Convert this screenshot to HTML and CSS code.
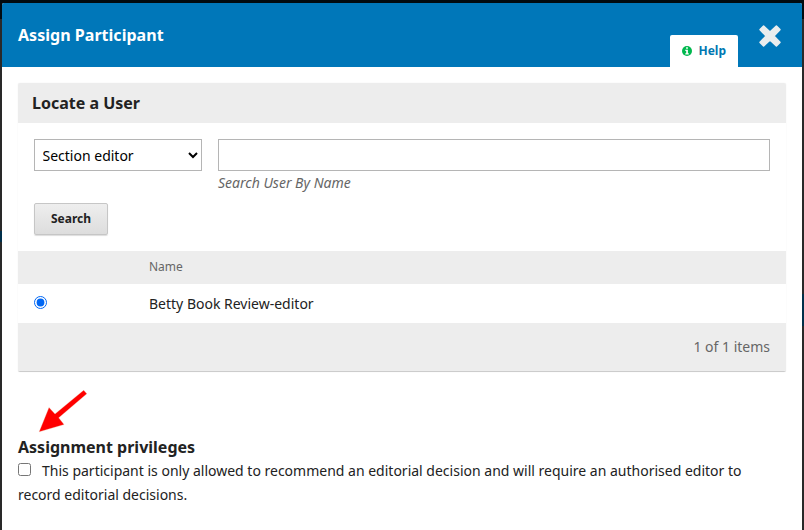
FILE: index.html
```html
<!DOCTYPE html>
<html lang="en">
<head>
<meta charset="utf-8">
<title>Assign Participant</title>
<link rel="stylesheet" href="styles.css">
</head>
<body>
<main class="modal">
  <header class="modal-header">
    <h1>Assign Participant</h1>
    <a class="help">
      <svg width="10" height="10" viewBox="0 0 10 10"><circle cx="5" cy="5" r="5" fill="#00b84e"/><path d="M4.1 1.3h1.8v1.5H4.1zM3.3 3.7h2.6v3.5h.9v1.2H3.3V7.2h.9V4.9h-.9z" fill="#fff"/></svg>
      <span>Help</span>
    </a>
    <svg class="close" width="22" height="22" viewBox="0 0 22 22"><path d="M4.6 1.1L11 7.1 17.4 1.1 20.9 4.6 14.9 11 20.9 17.4 17.4 20.9 11 14.9 4.6 20.9 1.1 17.4 7.1 11 1.1 4.6z" fill="#eaedee" stroke="#eaedee" stroke-width="1.6" stroke-linejoin="round"/></svg>
  </header>
  <section class="grid-box">
    <h2 class="grid-title">Locate a User</h2>
    <form class="filters">
      <div class="fields">
        <select class="role"><option>Section editor</option></select>
        <label class="name-field"><input type="text" class="name-input"><span>Search User By Name</span></label>
      </div>
      <button type="button" class="search">Search</button>
    </form>
    <div class="row row-head"><span></span><span>Name</span></div>
    <div class="row row-item"><span><input type="radio" checked class="radio"></span><span>Betty Book Review-editor</span></div>
    <div class="paging">1 of 1 items</div>
  </section>
  <section class="privileges">
    <h2>Assignment privileges</h2>
    <label class="privilege"><input type="checkbox" class="check">This participant is only allowed to recommend an editorial decision and will require an authorised editor to record editorial decisions.</label>
    <svg class="arrow" width="50" height="44" viewBox="0 0 50 44"><path d="M45.7 .2L48.8 3.8 20.7 27.8 26 34.6 1.2 41.8 11 17.6 17 24z" fill="#f00" stroke="#e7b396" stroke-width=".3"/></svg>
  </section>
</main>
</body>
</html>
```

FILE: styles.css
```css
* { box-sizing: border-box; }
body {
  margin: 0;
  height: 530px;
  overflow: hidden;
  padding: 3px 2px 0;
  background:
    linear-gradient(#010b10, #010b10) 0 0 / 100% 19px no-repeat,
    linear-gradient(#002f4a, #002f4a) 0 231px / 2px 11px no-repeat,
    linear-gradient(#002f4a, #002f4a) 100% 294px / 2px 32px no-repeat,
    #292929;
  color: #222;
  font: 14px/24px "Noto Sans", sans-serif;
}
.modal {
  height: 527px;
  background: #fff;
  border-radius: 2px 2px 0 0;
}
.modal-header {
  display: flex;
  align-items: flex-start;
  height: 64px;
  padding: 0 21px 0 16px;
  background: #0077b9;
  border-radius: 2px 2px 0 0;
  color: #fff;
}
h1 { margin: 20px auto 0 0; font-size: 16px; line-height: 24px; letter-spacing: .03px; }
.help {
  display: flex;
  align-items: center;
  gap: 7px;
  width: 68px;
  height: 32px;
  margin: 32px 21px 0 0;
  padding-left: 12px;
  border-radius: 2px 2px 0 0;
  background: #fff;
  color: #0077b2;
  font-size: 12px;
  font-weight: 700;
}
.help span { margin-left: -.5px; }
.close { margin-top: 22px; }
.grid-box {
  height: 289px;
  margin: 16px 16px 0;
  border-bottom: 1px solid #ccc;
  border-radius: 2px;
  box-shadow: 0 0 1px #ddd;
  overflow: hidden;
}
.grid-title {
  margin: 0;
  height: 40px;
  padding-left: 14px;
  background: #ededed;
  font-size: 16px;
  line-height: 40px;
}
.filters { height: 128px; padding: 16px 16px 0; }
.fields { display: flex; gap: 16px; height: 64px; }
.role, .name-input {
  height: 32px;
  border: 1px solid #b5b5b5;
  border-radius: 0;
  background: #fff;
  color: #000;
  font: 14px "Noto Sans", sans-serif;
}
.role { width: 168px; padding: 1px 0 0 3.5px; }
.name-field { display: flex; flex-direction: column; flex: 1; color: #666; font-size: 14px; font-style: italic; }
.name-input { width: 100%; }
.search {
  display: block;
  width: 74px;
  height: 32px;
  padding: 0 0 2px;
  border: 1px solid #c6c6c6;
  border-radius: 2px;
  background: linear-gradient(#eee, #ddd);
  box-shadow: 0 1px 1px #ddd;
  color: #222;
  font: 700 12px "Noto Sans", sans-serif;
}
.row { display: grid; grid-template-columns: 115px 1fr; padding-left: 16px; }
.row-head { height: 33px; background: #ededed; color: #666; font-size: 12px; line-height: 32px; }
.row-item { height: 39px; line-height: 40px; }
.radio { display: block; width: 13px; height: 13px; margin: 12px 0 0; accent-color: #0067f4; }
.paging { height: 49px; padding-right: 16px; background: #ededed; color: #666; line-height: 48px; text-align: right; }
.privileges { position: relative; margin: 63px 50px 0 16px; }
.privileges h2 { margin: 0; font-size: 16px; line-height: 24px; }
.privilege { display: block; }
.check { width: 13px; height: 13px; margin: 0 11px 0 0; vertical-align: 0; }
.arrow { position: absolute; left: 20px; top: -45px; }
```
